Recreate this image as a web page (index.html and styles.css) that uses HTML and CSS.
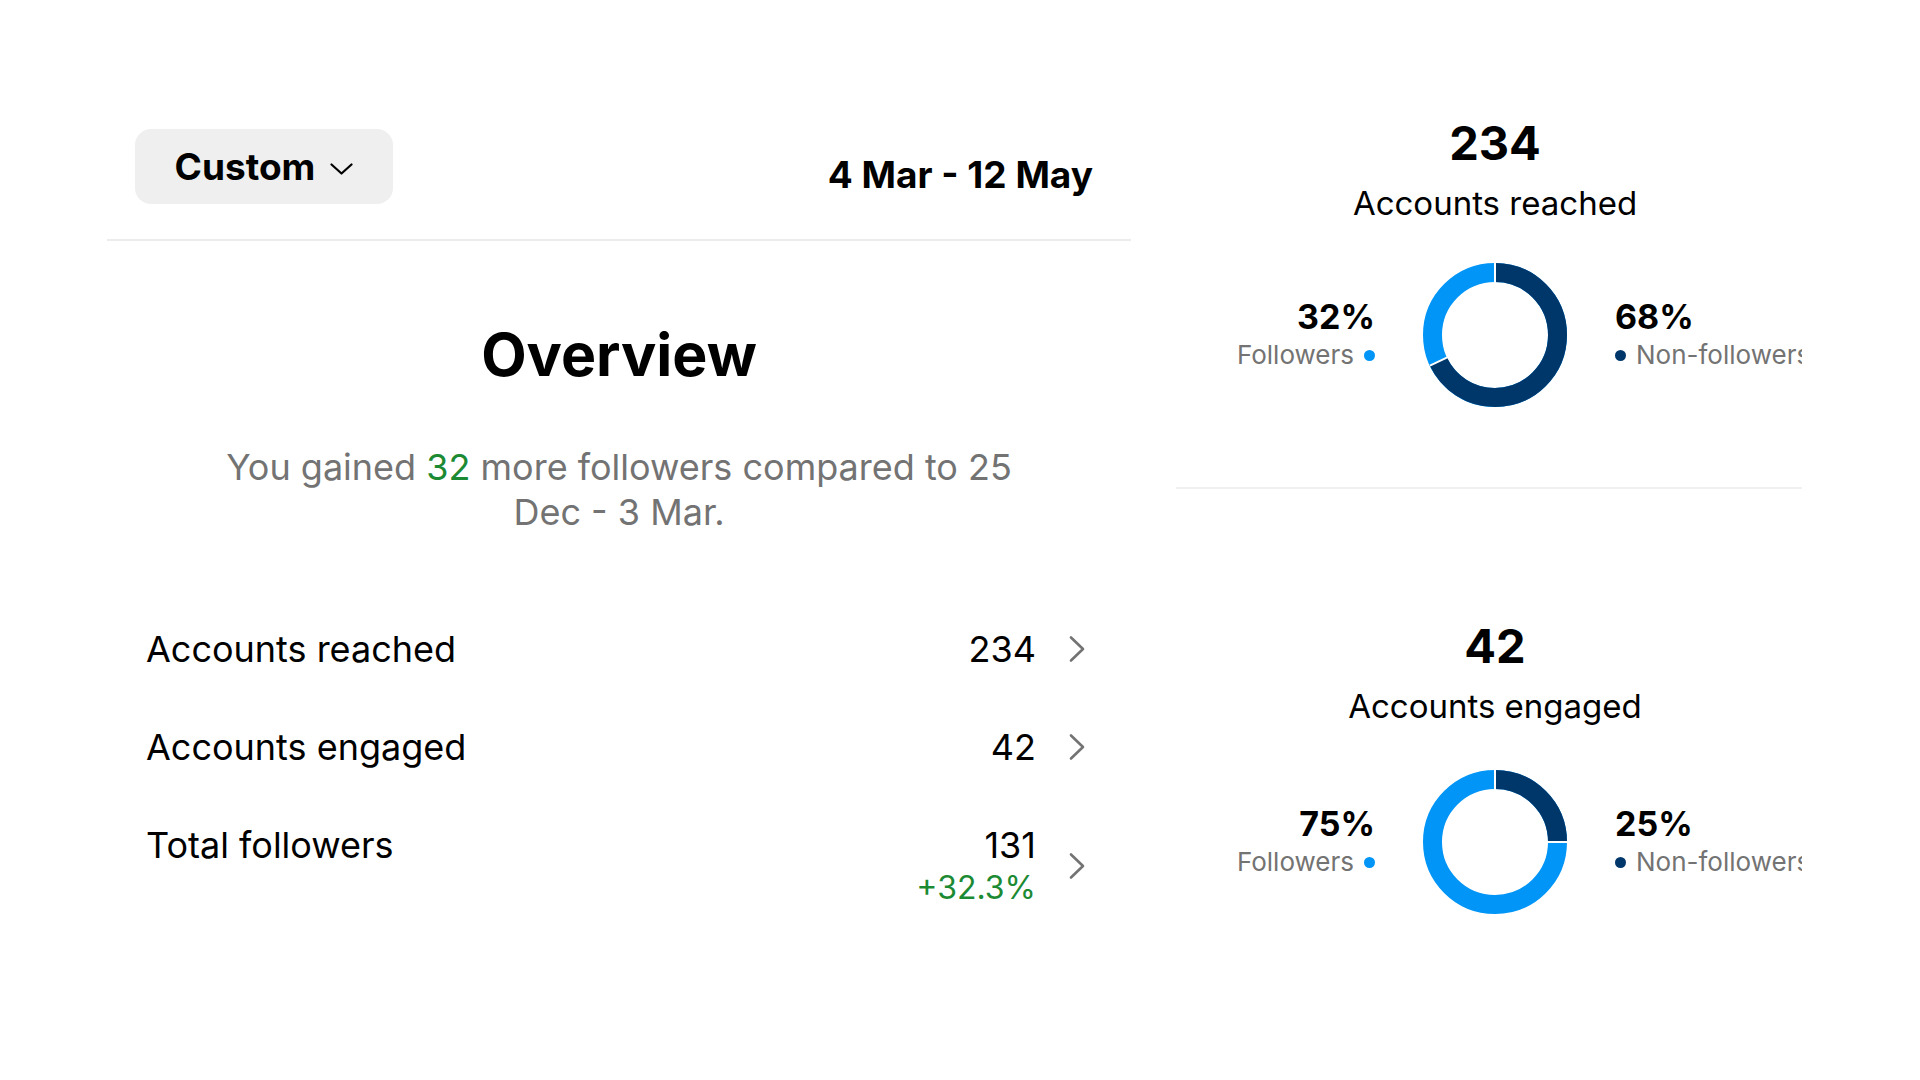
FILE: index.html
```html
<!DOCTYPE html>
<html lang="en">
<head>
<meta charset="utf-8">
<title>Insights overview</title>
<link rel="stylesheet" href="styles.css">
</head>
<body>
<main class="page">
  <section class="left">
    <header class="range">
      <button class="range-btn">Custom
        <svg class="caret" width="23" height="12" viewBox="0 0 23 12"><path d="M1.5 1.5 L11.5 10.5 L21.5 1.5" fill="none" stroke="#000" stroke-width="2.2" stroke-linecap="round" stroke-linejoin="round"/></svg>
      </button>
      <div class="range-dates">4 Mar - 12 May</div>
    </header>

    <h1 class="title">Overview</h1>
    <p class="summary">You gained <span class="up">32</span> more followers compared to 25 Dec - 3 Mar.</p>

    <ul class="metrics">
      <li class="metric">
        <span class="metric-label">Accounts reached</span>
        <span class="metric-right">
          <span class="metric-values"><span class="metric-value">234</span></span>
          <svg class="chev" width="18" height="28" viewBox="0 0 18 28"><path d="M3 2.5 L15 14 L3 25.5" fill="none" stroke="#737373" stroke-width="2.6" stroke-linecap="round" stroke-linejoin="round"/></svg>
        </span>
      </li>
      <li class="metric">
        <span class="metric-label">Accounts engaged</span>
        <span class="metric-right">
          <span class="metric-values"><span class="metric-value">42</span></span>
          <svg class="chev" width="18" height="28" viewBox="0 0 18 28"><path d="M3 2.5 L15 14 L3 25.5" fill="none" stroke="#737373" stroke-width="2.6" stroke-linecap="round" stroke-linejoin="round"/></svg>
        </span>
      </li>
      <li class="metric">
        <span class="metric-label">Total followers</span>
        <span class="metric-right">
          <span class="metric-values"><span class="metric-value">131</span><span class="metric-delta">+32.3%</span></span>
          <svg class="chev" width="18" height="28" viewBox="0 0 18 28"><path d="M3 2.5 L15 14 L3 25.5" fill="none" stroke="#737373" stroke-width="2.6" stroke-linecap="round" stroke-linejoin="round"/></svg>
        </span>
      </li>
    </ul>
  </section>

  <section class="right">
    <div class="stat stat-first">
      <div class="stat-num">234</div>
      <div class="stat-label">Accounts reached</div>
      <div class="chart">
        <div class="legend legend-l">
          <div class="legend-pct">32%</div>
          <div class="legend-name">Followers <span class="dot dot-light"></span></div>
        </div>
        <svg class="donut" width="144" height="144" viewBox="0 0 144 144">
          <circle cx="72" cy="72" r="62.5" fill="none" stroke="#0095f6" stroke-width="19"/>
          <circle cx="72" cy="72" r="62.5" fill="none" stroke="#00376b" stroke-width="19" stroke-dasharray="267.04 500" transform="rotate(-90 72 72)"/>
          <line x1="72" y1="21" x2="72" y2="0" stroke="#fff" stroke-width="2"/>
          <line x1="25.9" y1="93.7" x2="6.9" y2="102.6" stroke="#fff" stroke-width="2"/>
        </svg>
        <div class="legend legend-r">
          <div class="legend-pct">68%</div>
          <div class="legend-name"><span class="dot dot-dark"></span> Non-followers</div>
        </div>
      </div>
    </div>

    <div class="sep"></div>

    <div class="stat stat-second">
      <div class="stat-num">42</div>
      <div class="stat-label">Accounts engaged</div>
      <div class="chart chart-low">
        <div class="legend legend-l">
          <div class="legend-pct">75%</div>
          <div class="legend-name">Followers <span class="dot dot-light"></span></div>
        </div>
        <svg class="donut" width="144" height="144" viewBox="0 0 144 144">
          <circle cx="72" cy="72" r="62.5" fill="none" stroke="#0095f6" stroke-width="19"/>
          <circle cx="72" cy="72" r="62.5" fill="none" stroke="#00376b" stroke-width="19" stroke-dasharray="98.17 500" transform="rotate(-90 72 72)"/>
          <line x1="72" y1="21" x2="72" y2="0" stroke="#fff" stroke-width="2"/>
          <line x1="123" y1="72" x2="144" y2="72" stroke="#fff" stroke-width="2"/>
        </svg>
        <div class="legend legend-r">
          <div class="legend-pct">25%</div>
          <div class="legend-name"><span class="dot dot-dark"></span> Non-followers</div>
        </div>
      </div>
    </div>
  </section>
</main>
</body>
</html>
```
FILE: styles.css
```css
* { box-sizing: border-box; }

body {
  margin: 0;
  background: #fff;
  color: #000;
  font-family: Inter, "Noto Sans", "Liberation Sans", sans-serif;
}

.page {
  display: flex;
  width: 1920px;
  height: 1080px;
  overflow: hidden;
}

/* ---------- left column ---------- */
.left {
  margin-left: 107px;
  width: 1024px;
  flex: none;
  display: flex;
  flex-direction: column;
}

.range {
  display: flex;
  align-items: flex-start;
  justify-content: space-between;
  margin-top: 129px;
  padding: 0 38px 35px 28px;
  border-bottom: 2px solid #ececec;
}

.range-btn {
  width: 258px;
  height: 75px;
  border: 0;
  border-radius: 16px;
  background: #efefef;
  display: flex;
  align-items: center;
  justify-content: center;
  gap: 15px;
  padding: 0;
  font-family: inherit;
  font-size: 37px;
  font-weight: 700;
  color: #000;
}

.caret { display: block; margin-top: 4px; }

.range-dates {
  margin-top: 24px;
  font-size: 37px;
  font-weight: 700;
  line-height: 44px;
}

.title {
  margin: 84px 0 0;
  text-align: center;
  font-size: 59px;
  font-weight: 700;
  line-height: 60px;
}

.summary {
  margin: 60px auto 0;
  max-width: 820px;
  text-align: center;
  font-size: 36px;
  line-height: 45px;
  color: #737373;
}

.up { color: #1c8a33; }

.metrics {
  list-style: none;
  margin: 92px 0 0;
  padding: 0 45px 0 39px;
  display: flex;
  flex-direction: column;
  gap: 54px;
}

.metric {
  display: flex;
  justify-content: space-between;
  align-items: flex-start;
  font-size: 36px;
  line-height: 44px;
}

.metric-right {
  display: flex;
  align-items: center;
  gap: 32px;
}

.metric-values {
  display: flex;
  flex-direction: column;
  align-items: flex-end;
}

.metric-delta {
  color: #1c8a33;
  font-size: 32px;
  line-height: 42px;
}

.chev { display: block; flex: none; }

/* ---------- right column ---------- */
.right {
  margin-left: 45px;
  width: 626px;
  flex: none;
  overflow: hidden;
}

.stat {
  width: 638px;
  display: flex;
  flex-direction: column;
  align-items: center;
}

.stat-first { padding-top: 115px; }
.stat-second { padding-top: 129px; }

.stat-num {
  font-size: 47px;
  font-weight: 700;
  line-height: 56px;
}

.stat-label {
  margin-top: 12px;
  font-size: 33px;
  line-height: 40px;
}

.chart {
  margin-top: 40px;
  display: flex;
  align-items: center;
  justify-content: center;
  gap: 48px;
}

.chart-low { margin-top: 44px; }

.donut { display: block; flex: none; }

.legend {
  width: 230px;
  flex: none;
}

.legend-l { text-align: right; }

.legend-pct {
  font-size: 34px;
  font-weight: 700;
  line-height: 40px;
}

.legend-name {
  display: flex;
  align-items: center;
  gap: 10px;
  white-space: nowrap;
  font-size: 26px;
  line-height: 36px;
  color: #737373;
}

.legend-l .legend-name { justify-content: flex-end; }

.dot {
  width: 11px;
  height: 11px;
  border-radius: 50%;
  flex: none;
}

.dot-light { background: #0095f6; }
.dot-dark { background: #00376b; }

.sep {
  margin-top: 80px;
  height: 2px;
  background: #f0f0f0;
}
```
